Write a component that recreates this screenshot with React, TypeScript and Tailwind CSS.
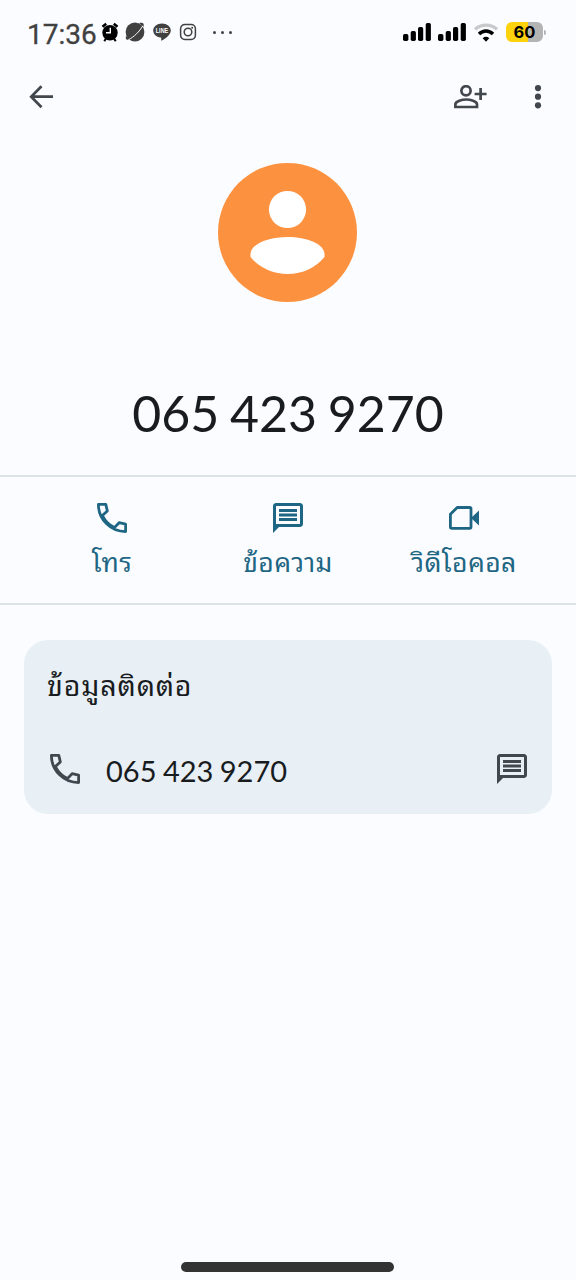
import React from "react";

const phoneNumber = "065 423 9270";

function AlarmIcon() {
  return (
    <svg className="h-5 w-[18px] shrink-0" viewBox="0 0 18 20">
      <path d="M1.500 4.800 5.200 1.700M12.800 1.700 16.500 4.800" fill="none" stroke="#000" strokeWidth="2.500" />
      <circle cx="9" cy="10.800" r="7.700" fill="#000" />
      <path d="M5 16.500 3.300 19.300M13 16.500l1.700 2.800" stroke="#000" strokeWidth="2" />
      <path d="M9.300 5.700v5.100H5" fill="none" stroke="#fbfcff" strokeWidth="1.400" />
    </svg>
  );
}

function PlanetIcon() {
  return (
    <svg className="h-5 w-5 shrink-0" viewBox="0 0 20 20">
      <circle cx="10" cy="10" r="9.400" fill="#414141" />
      <path d="M1 14C.2 17.500 1.500 18.600 5 17M14 1C17.500.3 19.700 1 18.500 5" fill="#414141" />
      <path d="M3.600 17.600C9 15 14.500 9.500 17.800 3.800" fill="none" stroke="#fbfcff" strokeWidth="1" />
    </svg>
  );
}

function LineIcon() {
  return (
    <svg className="h-[18px] w-[18px] shrink-0" viewBox="0 0 18 18">
      <path d="M9 .4C4.100.4.200 3.600.200 7.500c0 3.600 3.100 6.500 7.300 7 .8.100.9.600.8 1.300l-.2 1.500c0 .4.200.5.600.3 3-1.500 9.100-5.500 9.100-10.100C17.800 3.600 13.900.4 9 .4Z" fill="#414141" />
      <text x="9" y="9.800" textAnchor="middle" textLength="12.400" lengthAdjust="spacingAndGlyphs" fontFamily="Liberation Sans, sans-serif" fontWeight="700" fontSize="6.400" fill="#fff">
        LINE
      </text>
    </svg>
  );
}

function CameraIcon() {
  return (
    <svg className="h-[18px] w-[18px] shrink-0" viewBox="0 0 18 18" fill="none" stroke="#414141" strokeWidth="1.500">
      <rect x="1.600" y="1.600" width="14.800" height="14.800" rx="4.200" />
      <circle cx="9" cy="9" r="3.800" />
      <circle cx="13.200" cy="4.800" r="1" fill="#414141" stroke="none" />
    </svg>
  );
}

function SignalIcon() {
  return (
    <svg className="h-[18px] w-7 shrink-0" viewBox="0 0 28 18">
      <rect x="0" y="11" width="5.400" height="7" rx="1.700" />
      <rect x="7.700" y="8" width="5.200" height="10" rx="1.700" />
      <rect x="15" y="4" width="5.200" height="14" rx="1.700" />
      <rect x="22.700" y="0" width="5.200" height="18" rx="1.700" />
    </svg>
  );
}

function WifiIcon() {
  return (
    <svg className="h-[19px] w-6 shrink-0" viewBox="0 0 24 19" fill="none" strokeWidth="3.200">
      <path d="M1 6.300C7 .600 17 .600 23 6.300" stroke="#c8c9cb" />
      <path d="M5 11c4-4 10-4 14 0" stroke="#000" strokeWidth="3.400" />
      <path d="M8.700 15.200c2-1.800 4.600-1.800 6.600 0L12 18.800Z" fill="#000" />
    </svg>
  );
}

function Battery() {
  return (
    <div className="flex items-center">
      <div className="flex h-5 w-[37px] items-center justify-center rounded-[6px] bg-linear-to-r from-[#ffd20b] from-60% to-[#b4b4b4] to-60%">
        <span className="font-[Inter,sans-serif] text-[16.5px] leading-5 font-bold text-black">60</span>
      </div>
      <div className="ml-px h-[5px] w-[2px] rounded-r-full bg-[#b4b4b4]" />
    </div>
  );
}

function PhoneIcon() {
  return (
    <svg className="h-[30px] w-[30px]" viewBox="0 0 30 30" fill="none" stroke="currentColor" strokeWidth="2.800" strokeLinejoin="round">
      <path d="M1.400 1.400H8.800L10.300 7.900 5.400 12.600C8 17.800 12.200 22 17.400 24.600L22.100 19.700 28.600 21.200V28.600C13.600 28.600 1.400 16.400 1.400 1.400Z" />
    </svg>
  );
}

function MessageIcon() {
  return (
    <svg className="h-[30px] w-[30px]" viewBox="2 2 20 20" fill="currentColor">
      <path d="M20 2H4c-1.100 0-2 .9-2 2v18l4-4h14c1.100 0 2-.9 2-2V4c0-1.100-.9-2-2-2zm0 14H4V4h16v12zM6 12h12v2H6v-2zm0-3h12v2H6V9zm0-3h12v2H6V6z" />
    </svg>
  );
}

function VideoIcon() {
  return (
    <svg className="h-[30px] w-[30px]" viewBox="0 0 30 30" fill="none" stroke="currentColor" strokeWidth="2.800" strokeLinejoin="round">
      <path d="M8.200 4.500H20.600Q22 4.500 22 5.900V24Q22 25.400 20.600 25.400H2.800Q1.400 25.400 1.400 24V11.200Z" />
      <path d="M22 15 30 7.500v15Z" fill="currentColor" stroke="none" />
    </svg>
  );
}

function StatusBar() {
  return (
    <div className="flex h-16 items-center justify-between pr-[30px] pl-[27px]">
      <div className="flex items-center">
        <span className="mt-[6px] w-[74px] font-[Roboto,sans-serif] text-[28px] leading-8 text-[#414141] [-webkit-text-stroke:0.3px]">17:36</span>
        <AlarmIcon />
        <div className="ml-[6px] flex items-center gap-2">
          <PlanetIcon />
          <LineIcon />
          <CameraIcon />
        </div>
        <div className="ml-4 flex gap-[5px]">
          <i className="size-[3px] rounded-full bg-[#414141]" />
          <i className="size-[3px] rounded-full bg-[#414141]" />
          <i className="size-[3px] rounded-full bg-[#414141]" />
        </div>
      </div>
      <div className="flex items-center">
        <SignalIcon />
        <div className="ml-[7px]"><SignalIcon /></div>
        <div className="mr-2 ml-2"><WifiIcon /></div>
        <Battery />
      </div>
    </div>
  );
}

function Toolbar() {
  return (
    <div className="flex h-[66px] items-center justify-between pr-[34px] pl-[29px] text-[#42474e]">
      <svg className="h-6 w-[25px]" viewBox="0 0 25 24" fill="none" stroke="currentColor" strokeWidth="2.700">
        <path d="M12.500 1.200 2.200 11.700 12.500 22.200M2.200 11.700H24" />
      </svg>
      <div className="flex items-center gap-[46px]">
        <svg className="h-6 w-[34px]" viewBox="0 0 34 24" fill="none" stroke="currentColor" strokeWidth="2.700">
          <circle cx="12" cy="5.800" r="4.600" />
          <path d="M1.400 22V19.300C1.400 16.300 8.300 14.500 12.200 14.500S23 16.300 23 19.300V22Z" />
          <path d="M26.600 3v12M20.600 9h12" />
        </svg>
        <svg className="h-6 w-2" viewBox="0 0 8 24" fill="currentColor">
          <circle cx="4" cy="3.100" r="3.100" />
          <circle cx="4" cy="11.700" r="3.100" />
          <circle cx="4" cy="20.300" r="3.100" />
        </svg>
      </div>
    </div>
  );
}

function Action({ icon, label }: { icon: React.ReactNode; label: string }) {
  return (
    <button className="flex w-44 flex-col items-center pt-[26px] text-[#1e6683]">
      {icon}
      <span className="mt-[11px] text-[26.5px] leading-9 tracking-[0.4px] whitespace-nowrap">{label}</span>
    </button>
  );
}

function App() {
  return (
    <div className="flex h-[1280px] w-[576px] flex-col bg-[#fbfcff] font-[Lato,'Noto_Sans_Thai_Looped',Loma,Garuda,Waree,'Noto_Sans_Thai',sans-serif] text-[#191c1e]">
      <StatusBar />
      <Toolbar />
      <div className="flex h-[345px] flex-col items-center pt-[33px]">
        <svg className="mr-[2px] h-[139px] w-[139px] shrink-0" viewBox="0 0 139 139">
          <circle cx="69.500" cy="69.500" r="69.500" fill="#fc923f" />
          <circle cx="69.500" cy="46.500" r="18.600" fill="#fff" />
          <path d="M32.500 91.500C32.500 81 50 74 69.500 74S106.500 81 106.500 91.500V94C98 104.500 84.500 111 69.500 111S41 104.500 32.500 94Z" fill="#fff" />
        </svg>
        <h1 className="mt-[81px] text-[50px] leading-[60px] [word-spacing:-2px]">{phoneNumber}</h1>
      </div>
      <div className="flex h-[130px] justify-center border-y-2 border-[#dee3e7]">
        <Action icon={<PhoneIcon />} label="โทร" />
        <Action icon={<MessageIcon />} label="ข้อความ" />
        <Action icon={<VideoIcon />} label="วิดีโอคอล" />
      </div>
      <div className="mx-6 mt-[35px] h-[174px] rounded-3xl bg-[#e8eff5] pr-[25px] pl-[23px] pt-[25px]">
        <h2 className="text-[28.5px] leading-10 tracking-[0.9px]">ข้อมูลติดต่อ</h2>
        <div className="mt-[42px] flex items-center pl-[3px] text-[#42474e]">
          <PhoneIcon />
          <span className="mt-1 ml-[26px] flex-1 text-[29px] leading-10 [word-spacing:-1px] text-[#191c1e]">{phoneNumber}</span>
          <MessageIcon />
        </div>
      </div>
      <div className="mt-auto mb-2 ml-[181px] h-[10px] w-[213px] rounded-full bg-[#333333]" />
    </div>
  );
}

export default App;
